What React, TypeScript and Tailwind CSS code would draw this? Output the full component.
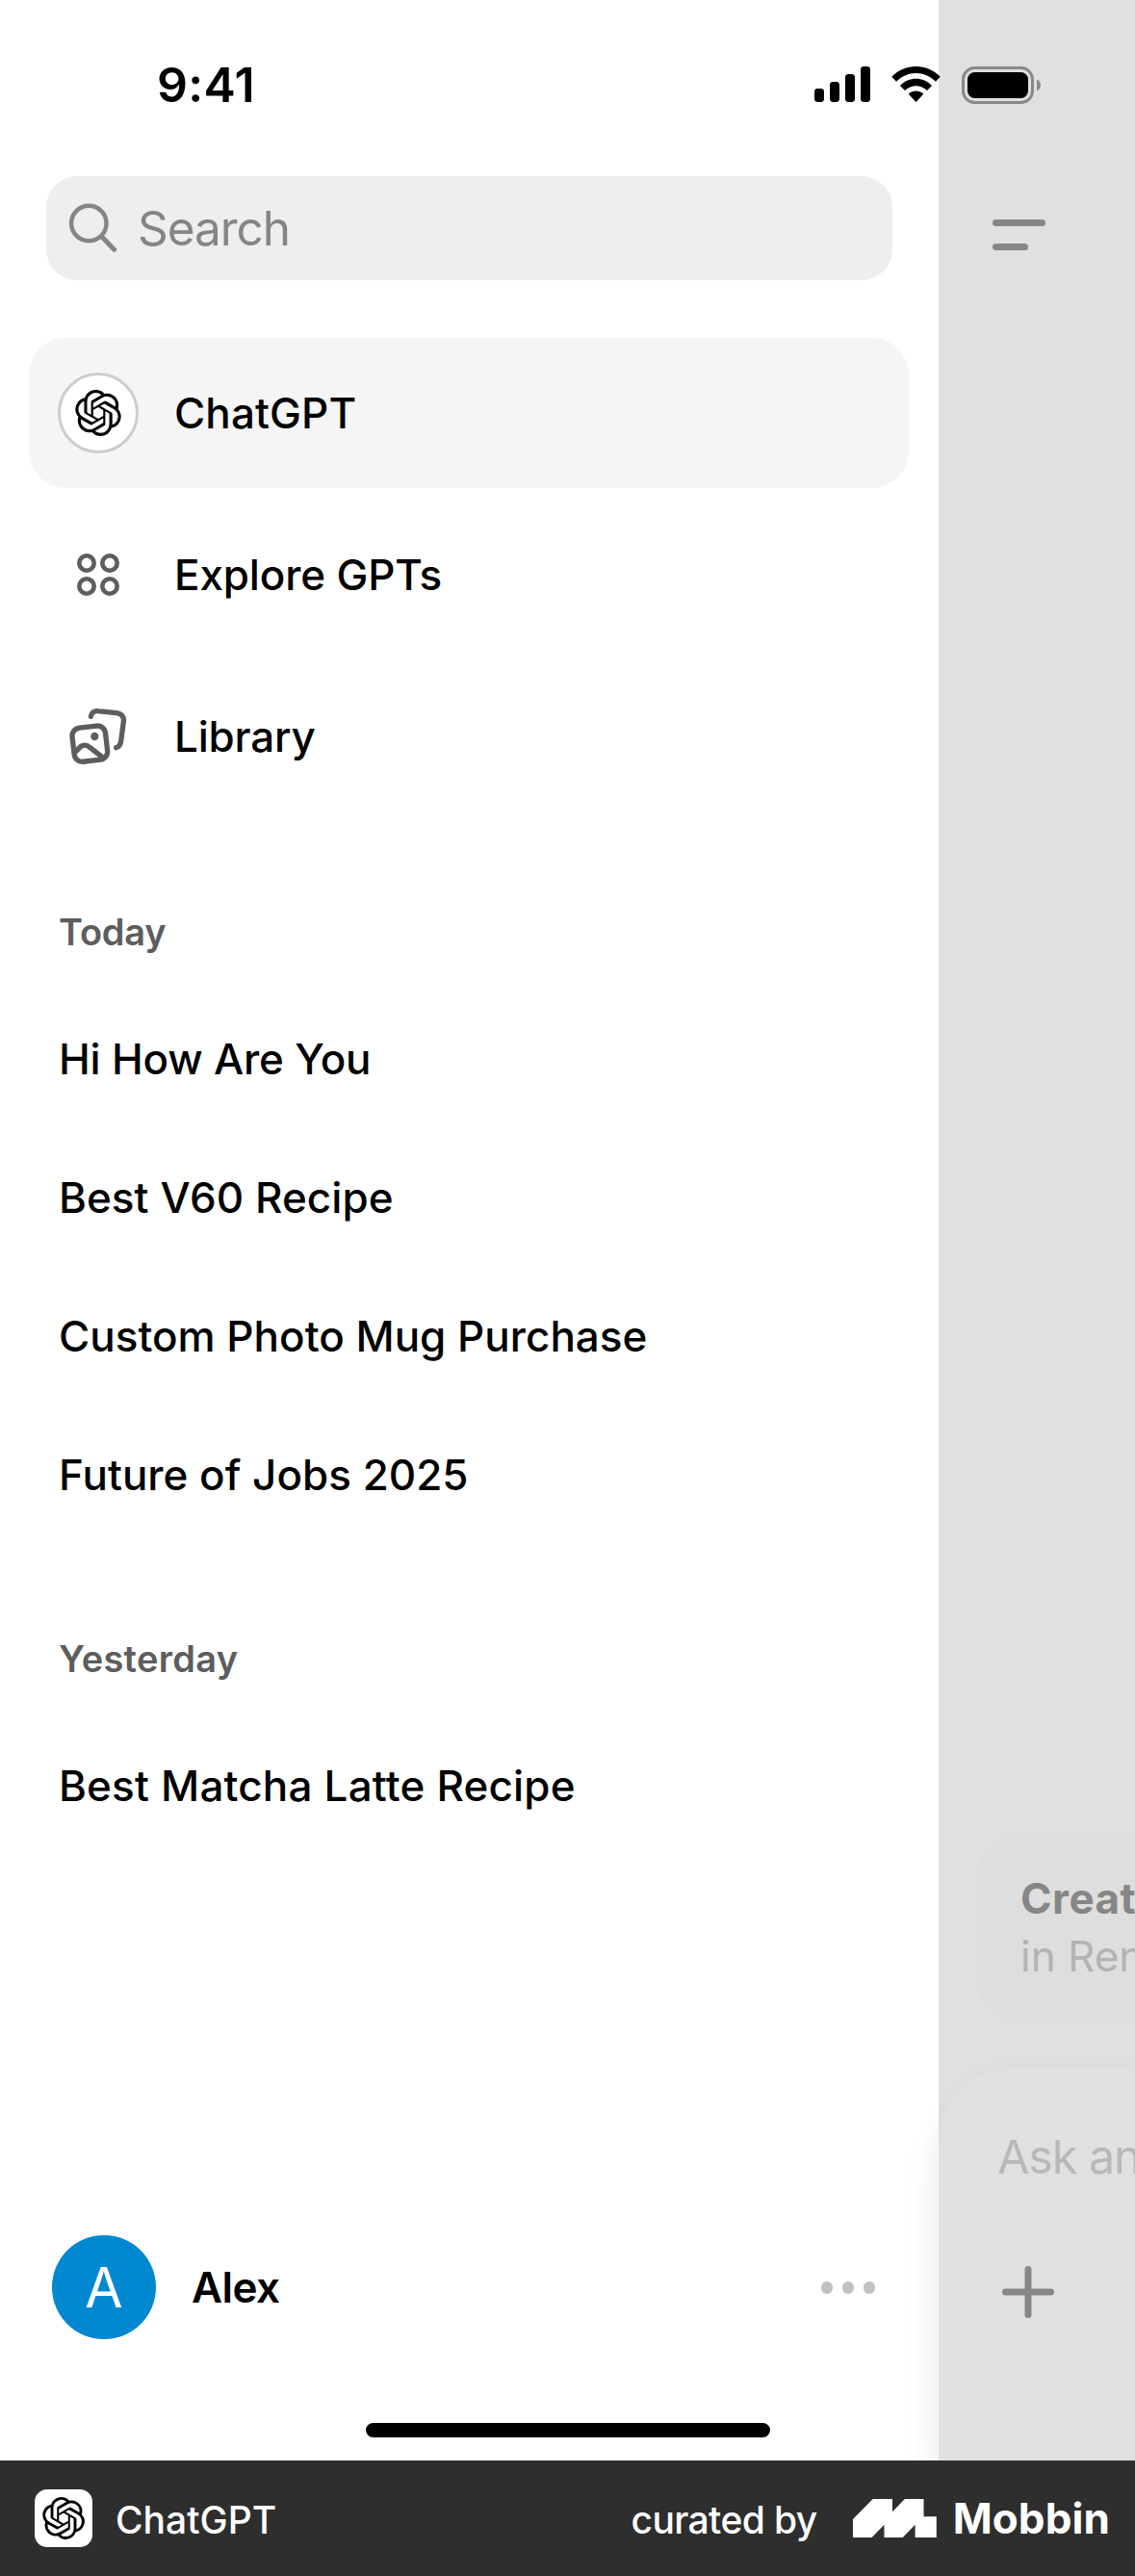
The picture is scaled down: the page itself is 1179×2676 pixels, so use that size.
import React from "react";
import { SiOpenai } from "react-icons/si";

const today = [
  { title: "Hi How Are You", tracking: "tracking-[-0.2px]" },
  { title: "Best V60 Recipe", tracking: "tracking-[0.05px]" },
  { title: "Custom Photo Mug Purchase", tracking: "tracking-[0px]" },
  { title: "Future of Jobs 2025", tracking: "tracking-[0px]" },
];

const yesterday = [{ title: "Best Matcha Latte Recipe", tracking: "tracking-[0.18px]" }];

function SearchIcon() {
  return (
    <svg className="size-[52px]" viewBox="0 0 52 52" fill="none" stroke="#858585" strokeWidth="4.4" strokeLinecap="round">
      <circle cx="21.3" cy="21" r="18.2" />
      <path d="M34.6 34.800 47.600 48.200" strokeWidth="5" />
    </svg>
  );
}

function GridIcon() {
  return (
    <svg className="size-[44px]" viewBox="0 0 44 44" fill="none" stroke="#5d5d5d" strokeWidth="4.6">
      <circle cx="10" cy="10" r="7.700" />
      <circle cx="34" cy="10" r="7.700" />
      <circle cx="10" cy="34" r="7.700" />
      <circle cx="34" cy="34" r="7.700" />
    </svg>
  );
}

function LibraryIcon() {
  return (
    <svg className="size-[66px]" viewBox="57 66 198 198" fill="none" stroke="#5d5d5d" strokeWidth="16" strokeLinecap="round" strokeLinejoin="round">
      <rect x="78" y="135" width="104" height="106" rx="25" transform="rotate(-6.5 130 188)" />
      <path d="M133 103C135 91 144 84 156 86L213 92C229 94 237 104 235 119L227 180C225 192 221 198 212 200" />
      <path d="M84 214 97 201C107 190 120 190 131 200L172 232" strokeLinecap="butt" />
      <circle cx="145" cy="165" r="12.5" fill="#5d5d5d" stroke="none" />
    </svg>
  );
}

function StatusBar() {
  return (
    <div className="absolute inset-x-0 top-0 z-20 flex h-[177px] items-center justify-between pr-[98px] pl-[163px]">
      <span className="pb-[2px] text-[50px] leading-none font-semibold tracking-[0.3px]">9:41</span>
      <svg className="h-[39px] w-[235px]" viewBox="0 0 235 39">
        <rect x="0" y="23" width="10" height="14" rx="3.4" />
        <rect x="16" y="16" width="10" height="21" rx="3.4" />
        <rect x="32" y="8" width="10" height="29" rx="3.4" />
        <rect x="48" y="0" width="10" height="37" rx="3.4" />
        <path d="M80.3 10.8C94-3.6 117-3.6 130.7 10.8L126 15.8C114.500 4.2 96.500 4.200 85 15.800Z" />
        <path d="M89 20C98.300 10.400 112.700 10.400 122 20L117 25C110.500 18.600 100.500 18.600 94 25Z" />
        <path d="M97.800 28.700C102 24.300 109 24.300 113.200 28.700L105.500 37Z" />
        <rect x="154.500" y="1.500" width="72" height="36" rx="12" fill="none" stroke="#888" strokeWidth="3" />
        <rect x="159" y="6" width="63" height="27" rx="7.500" />
        <path d="M231 13.500C236.200 15.500 236.200 23.500 231 25.500Z" fill="#888" />
      </svg>
    </div>
  );
}

function Section({ label, labelClass, items }: { label: string; labelClass: string; items: typeof today }) {
  return (
    <section className="px-[61px]">
      <h2 className={"flex h-[120px] items-center text-[38px] leading-none font-semibold text-[#5d5d5d] " + labelClass}>{label}</h2>
      <ul>
        {items.map((item) => (
          <li key={item.title} className={"flex h-36 items-center text-[44px] leading-none font-medium whitespace-nowrap " + item.tracking}>
            {item.title}
          </li>
        ))}
      </ul>
    </section>
  );
}

function Sidebar() {
  return (
    <aside className="flex w-[975px] shrink-0 flex-col bg-white pt-[183px]">
      <div className="mx-12 flex h-[108px] w-[879px] items-center rounded-[32px] bg-[#eeeeee] pl-[23px]">
        <SearchIcon />
        <span className="mt-px ml-[20px] text-[49.500px] leading-none tracking-[-1.050px] text-[#858585]">Search</span>
      </div>

      <nav className="mt-[60px] ml-[30px] flex w-[914px] flex-col gap-3">
        <a className="flex h-[156px] items-center rounded-[38px] bg-[#f5f5f5] pl-[30px]">
          <span className="flex size-[84px] items-center justify-center rounded-full border-[3px] border-[#cdcdcd] bg-white">
            <SiOpenai className="size-[48px]" />
          </span>
          <span className="ml-[37px] text-[44px] leading-none font-medium tracking-[0.1px]">ChatGPT</span>
        </a>
        <a className="flex h-[156px] items-center pl-[30px]">
          <span className="flex size-[84px] items-center justify-center">
            <GridIcon />
          </span>
          <span className="ml-[37px] text-[44px] leading-none font-medium tracking-[-0.15px]">Explore GPTs</span>
        </a>
        <a className="flex h-[156px] items-center pl-[30px]">
          <span className="flex size-[84px] items-center justify-center">
            <LibraryIcon />
          </span>
          <span className="ml-[37px] text-[44px] leading-none font-medium tracking-[-0.2px]">Library</span>
        </a>
      </nav>

      <div className="mt-[65px] flex flex-col gap-[59px]">
        <Section label="Today" labelClass="tracking-[-0.2px]" items={today} />
        <Section label="Yesterday" labelClass="tracking-[0.3px]" items={yesterday} />
      </div>

      <div className="mt-auto mb-[126px] flex h-[108px] items-center pr-[66px] pl-[54px]">
        <span className="flex size-[108px] items-center justify-center rounded-full bg-[#0288d1] text-[57px] leading-none text-white">A</span>
        <span className="ml-[37px] text-[44px] leading-none font-semibold tracking-[-0.5px]">Alex</span>
        <span className="mt-px ml-auto flex gap-[9.500px]">
          <i className="size-[12.500px] rounded-full bg-[#c1c1c1]" />
          <i className="size-[12.500px] rounded-full bg-[#c1c1c1]" />
          <i className="size-[12.500px] rounded-full bg-[#c1c1c1]" />
        </span>
      </div>
    </aside>
  );
}

function ChatPane() {
  return (
    <div className="relative z-10 flex w-[204px] shrink-0 flex-col bg-[#e0e0e0] pt-[228px]">
      <div className="ml-14 flex flex-col gap-[18.500px]">
        <i className="h-[6.500px] w-[55px] rounded-full bg-[#878787]" />
        <i className="h-[6.500px] w-[37px] rounded-full bg-[#878787]" />
      </div>

      <div className="mt-auto ml-[38px] flex h-[198px] flex-col justify-center gap-[16px] rounded-l-[48px] bg-[#dedede] pb-[4px] pl-[47px] text-[44px] leading-none whitespace-nowrap">
        <span className="font-bold tracking-[0.5px] text-[#868686]">Creat</span>
        <span className="text-[#b3b3b3]">in Ren</span>
      </div>

      <div className="mt-[46px] flex h-[407px] flex-col rounded-tl-[76px] bg-[#e0e0e0] pt-[68px] pl-[61px] shadow-[0_0_24px_rgba(0,0,0,0.03),-14px_36px_30px_rgba(0,0,0,0.04)]">
        <span className="text-[48.500px] leading-none tracking-[-1.100px] whitespace-nowrap text-[#b8b8b8]">Ask an</span>
        <svg className="mt-[88px] ml-[5px] size-[54px]" viewBox="0 0 54 54" stroke="#878787" strokeWidth="7" strokeLinecap="round">
          <path d="M27 3.500V50.500M3.500 27H50.500" />
        </svg>
      </div>
    </div>
  );
}

function Footer() {
  return (
    <footer className="relative z-20 flex h-[120px] shrink-0 items-center bg-[#2e2e2e] pr-[26px] pl-9 text-white">
      <span className="flex size-[60px] items-center justify-center rounded-[13px] bg-white">
        <SiOpenai className="size-[44px] text-black" />
      </span>
      <span className="mt-[3px] ml-[24px] text-[39px] leading-none font-medium">ChatGPT</span>
      <span className="mt-[3px] ml-auto text-[39px] leading-none font-medium tracking-[-0.6px]">curated by</span>
      <svg className="ml-[37px] h-[40px] w-[87px]" viewBox="0 0 87 40" fill="#fff">
        <path d="M20.700 0H41V13.300L53.900 0H73.500V18.300H86.800V40H64.600V26.700L51.700 40H32.500V26.700L19.600 40H0V21Z" />
      </svg>
      <span className="ml-[17px] text-[44px] leading-none font-bold tracking-[0.1px]">Mobbin</span>
    </footer>
  );
}

export default function App() {
  return (
    <div className="relative flex h-[2676px] w-[1179px] flex-col overflow-hidden bg-white font-['Inter',sans-serif] text-black">
      <StatusBar />
      <main className="flex h-[2556px] shrink-0">
        <Sidebar />
        <ChatPane />
      </main>
      <div className="absolute top-[2517px] left-[380px] z-20 h-[15px] w-[420px] rounded-full bg-black" />
      <Footer />
    </div>
  );
}
